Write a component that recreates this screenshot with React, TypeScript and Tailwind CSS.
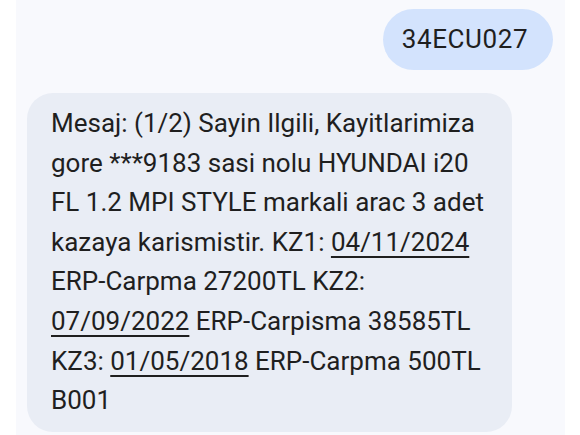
import React from "react";

// Tarihler altı çizili, link gibi gösteriliyor
function DateLink({ children }: { children: React.ReactNode }) {
  return (
    <span className="underline decoration-[1.5px] underline-offset-[5px]">
      {children}
    </span>
  );
}

const lines: React.ReactNode[] = [
  "Mesaj: (1/2) Sayin Ilgili, Kayitlarimiza",
  "gore ***9183 sasi nolu HYUNDAI i20",
  "FL 1.2 MPI STYLE markali arac 3 adet",
  <>
    kazaya karismistir. KZ1: <DateLink>04/11/2024</DateLink>
  </>,
  "ERP-Carpma 27200TL KZ2:",
  <>
    <DateLink>07/09/2022</DateLink> ERP-Carpisma 38585TL
  </>,
  <>
    KZ3: <DateLink>01/05/2018</DateLink> ERP-Carpma 500TL
  </>,
  "B001",
];

export default function App() {
  return (
    <div
      className="w-[580px] h-[435px] overflow-hidden bg-white flex"
      style={{ fontFamily: "Roboto, 'Noto Sans', sans-serif" }}
    >
      <div className="ml-[16px] w-[549px] h-full bg-[#f8f9fd] flex flex-col">
        {/* giden mesaj */}
        <div className="flex justify-end pt-[9px] pr-[12px]">
          <div className="w-[170px] h-[61px] rounded-full bg-[#d3e3fd] flex items-center justify-center pr-[6px] text-[26px] tracking-[0.6px] text-[#1f1f1f]">
            34ECU027
          </div>
        </div>

        {/* gelen mesaj */}
        <div className="mt-[23px] ml-[11px] w-[485px] rounded-[26px] bg-[#e9edf5] pl-[24px] pr-[12px] py-[11px] text-[26px] leading-[39.6px] text-[#1f1f1f] whitespace-nowrap">
          {lines.map((l, i) => (
            <div key={i}>{l}</div>
          ))}
        </div>
      </div>
    </div>
  );
}
